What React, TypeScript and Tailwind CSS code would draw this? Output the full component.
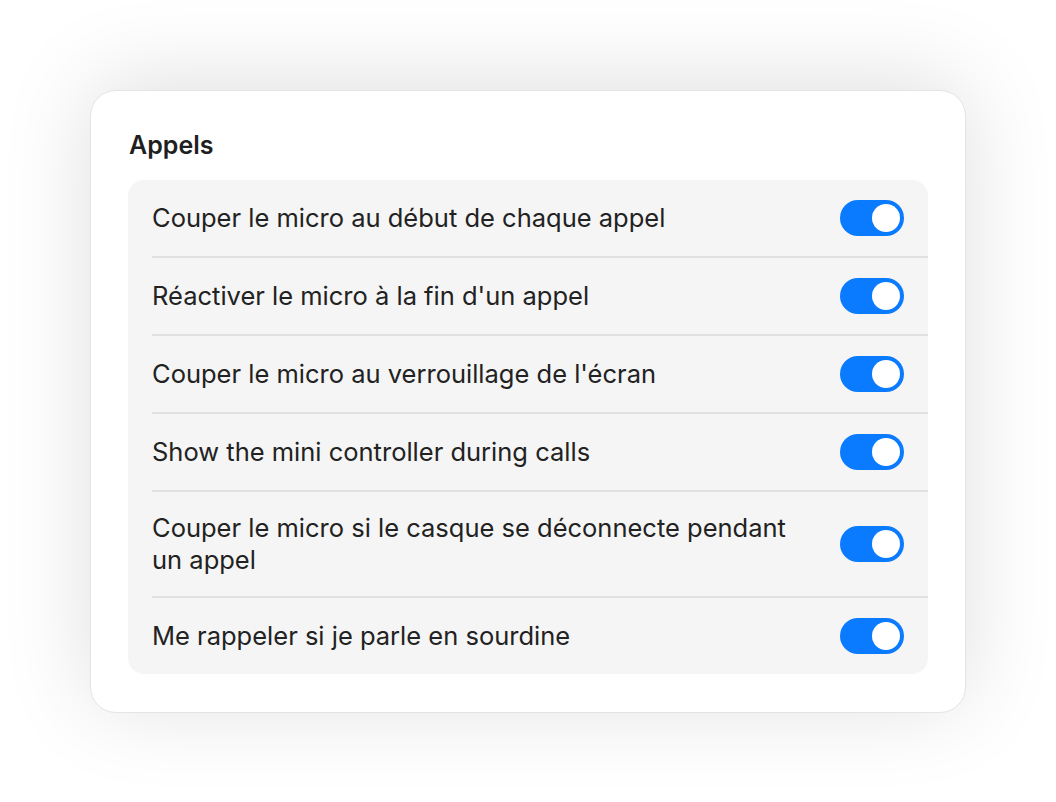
const rows = [
  "Couper le micro au début de chaque appel",
  "Réactiver le micro à la fin d'un appel",
  "Couper le micro au verrouillage de l'écran",
  "Show the mini controller during calls",
  "Couper le micro si le casque se déconnecte pendant un appel",
  "Me rappeler si je parle en sourdine",
];

function Toggle() {
  return (
    <div className="w-[64px] h-[36px] rounded-full bg-[#0a7aff] flex items-center justify-end px-[4px] shrink-0">
      <div className="size-[28px] rounded-full bg-white" />
    </div>
  );
}

export default function App() {
  return (
    <div className="min-h-[802px] w-full bg-white flex items-center justify-center" style={{ fontFamily: "Inter, 'Noto Sans', sans-serif" }}>
      <div className="w-[876px] rounded-[26px] bg-white border border-[#e4e4e4] shadow-[0_-8px_90px_rgba(0,0,0,0.13)] px-[37px] pt-[38px] pb-[38px]">
        <h2 className="text-[25px] font-semibold text-[#1f1f1f] leading-[32px] px-[1px] mb-[19px]">Appels</h2>
        <div className="rounded-[16px] bg-[#f5f5f5]">
          {rows.map((r, i) => (
            <div key={i} className="pl-[24px]">
              <div className={`flex items-center justify-between pr-[24px] py-[20px] ${i < rows.length - 1 ? "border-b-2 border-[#e0e0e0]" : ""}`}>
                <p className="text-[25.5px] leading-[32px] text-[#222] max-w-[660px]">{r}</p>
                <Toggle />
              </div>
            </div>
          ))}
        </div>
      </div>
    </div>
  );
}
